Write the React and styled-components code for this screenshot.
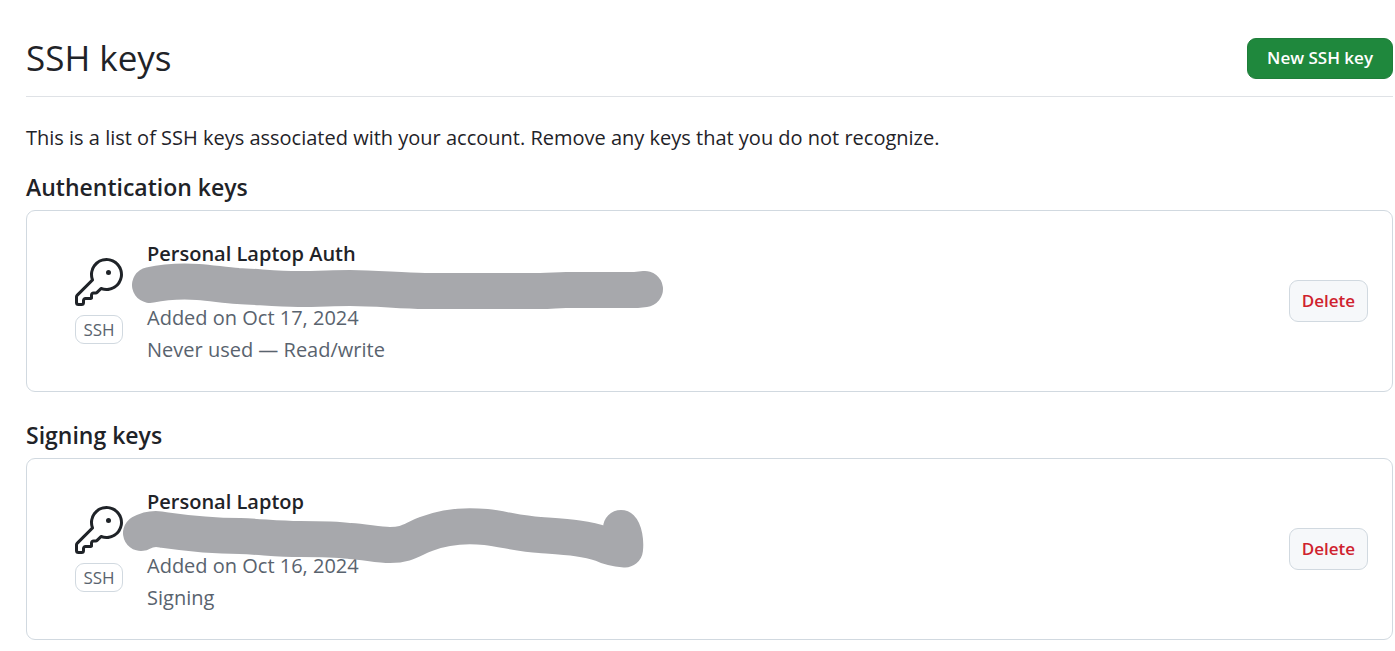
import React from "react";
import styled, { createGlobalStyle } from "styled-components";

const GlobalStyle = createGlobalStyle`
  *, *::before, *::after { box-sizing: border-box; }
  body {
    margin: 0;
    background: #ffffff;
    color: #1f2328;
    font-family: "Segoe UI", "Open Sans", "Noto Sans", sans-serif;
    font-size: 20px;
    line-height: 32px;
  }
`;

const Page = styled.main`
  padding: 32px 2px 10px 26px;
`;

const Header = styled.header`
  display: flex;
  align-items: center;
  justify-content: space-between;
  padding-bottom: 12px;
  border-bottom: 1px solid #dfe2e6;
`;

const Title = styled.h1`
  margin: 0;
  font-size: 35px;
  line-height: 52px;
  font-weight: 400;
`;

const Button = styled.button`
  height: ${(p) => (p.$primary ? 41 : 42)}px;
  padding: 0 ${(p) => (p.$primary ? 19 : 12)}px;
  border: 1px solid ${(p) => (p.$primary ? "#1f7d3a" : "#d1d9e0")};
  border-radius: 9px;
  background: ${(p) => (p.$primary ? "#1f883d" : "#f6f8fa")};
  color: ${(p) => (p.$primary ? "#ffffff" : "#cf222e")};
  font-family: inherit;
  font-size: 17px;
  line-height: 28px;
  font-weight: 600;
  white-space: nowrap;
  cursor: pointer;
`;

const Intro = styled.p`
  margin: 25px 0 16px;
`;

const Section = styled.section`
  & + & { margin-top: 26px; }
`;

const SectionTitle = styled.h2`
  margin: 0 0 6px;
  font-size: 23px;
  line-height: 34px;
  font-weight: 600;
`;

const KeyList = styled.ul`
  margin: 0;
  padding: 0;
  list-style: none;
  border: 1px solid #d1d9e0;
  border-radius: 9px;
`;

const KeyRow = styled.li`
  display: flex;
  align-items: center;
  gap: 24px;
  padding: 25px 24px 25px 48px;
`;

const KeyKind = styled.div`
  display: flex;
  flex-direction: column;
  align-items: center;
  gap: 9px;
  width: 48px;
`;

const Badge = styled.span`
  width: 100%;
  border: 1px solid #d1d9e0;
  border-radius: 9px;
  color: #59636e;
  font-size: 17px;
  line-height: 27px;
  text-align: center;
`;

const Details = styled.div`
  flex: 1;
  min-width: 0;
  padding-top: 2px;
  color: #59636e;
`;

const KeyName = styled.strong`
  display: block;
  color: #1f2328;
  font-weight: 600;
`;

const Fingerprint = styled.div`
  position: relative;
  height: 32px;
`;

const Marker = styled.svg`
  position: absolute;
  left: -27px;
  top: -11px;
  overflow: visible;
  fill: none;
  stroke: #a7a8ac;
  stroke-width: 36;
  stroke-linecap: round;
  stroke-linejoin: round;
`;

const Line = styled.span`
  display: block;
`;

const KeyIcon = () => (
  <svg width="48" height="48" viewBox="0 0 24 24" fill="#1f2328" aria-hidden="true">
    <path d="M16.75 8.5a1.25 1.25 0 1 0 0-2.5 1.25 1.25 0 0 0 0 2.5Z" />
    <path d="M15.75 0a8.25 8.25 0 1 1-2.541 16.101l-1.636 1.636a1.744 1.744 0 0 1-1.237.513H9.25a.25.25 0 0 0-.25.25v1.448a.876.876 0 0 1-.256.619l-.214.213a.75.75 0 0 1-.545.22H5.25a.25.25 0 0 0-.25.25v1A1.75 1.75 0 0 1 3.25 24h-1.5A1.75 1.75 0 0 1 0 22.25v-2.836c0-.464.185-.908.513-1.236l7.386-7.388A8.249 8.249 0 0 1 15.75 0ZM9 8.25a6.733 6.733 0 0 0 .463 2.462.75.75 0 0 1-.168.804l-7.722 7.721a.25.25 0 0 0-.073.177v2.836c0 .138.112.25.25.25h1.5a.25.25 0 0 0 .25-.25v-1c0-.966.784-1.75 1.75-1.75H7.5v-1c0-.966.784-1.75 1.75-1.75h1.086a.25.25 0 0 0 .177-.073l1.971-1.972a.75.75 0 0 1 .804-.168A6.75 6.75 0 1 0 9 8.25Z" />
  </svg>
);

const groups = [
  {
    title: "Authentication keys",
    keys: [
      {
        name: "Personal Laptop Auth",
        marker: "M30 26 C44 23 62 22 78 23 C92 24 104 26 118 27 C140 28 158 30 178 30 C200 30 212 29 230 29 C258 29 280 32 305 32 L420 32 C432 32 436 31 446 31 L516 31 L525 30",
        lines: ["Added on Oct 17, 2024", "Never used — Read/write"],
      },
    ],
  },
  {
    title: "Signing keys",
    keys: [
      {
        name: "Personal Laptop",
        marker: "M21 26 C28 22 36 21 44 23 C72 27 98 29 120 29 C144 30 158 32 180 32 C200 32 214 32 230 34 C246 35 258 38 270 38 C288 38 292 32 306 27 C326 19 346 18 366 20 C384 22 400 27 420 28 C446 30 466 31 482 37 C490 41 498 42 505 42.500 C506 34 504 24 501 21",
        lines: ["Added on Oct 16, 2024", "Signing"],
      },
    ],
  },
];

export default function App() {
  return (
    <>
      <GlobalStyle />
      <Page>
        <Header>
          <Title>SSH keys</Title>
          <Button type="button" $primary>New SSH key</Button>
        </Header>
        <Intro>
          This is a list of SSH keys associated with your account. Remove any keys that you do not recognize.
        </Intro>
        {groups.map((group) => (
          <Section key={group.title}>
            <SectionTitle>{group.title}</SectionTitle>
            <KeyList>
              {group.keys.map((item) => (
                <KeyRow key={item.name}>
                  <KeyKind>
                    <KeyIcon />
                    <Badge>SSH</Badge>
                  </KeyKind>
                  <Details>
                    <KeyName>{item.name}</KeyName>
                    <Fingerprint>
                      <Marker width="550" height="64" viewBox="0 0 550 64" aria-hidden="true">
                        <path d={item.marker} />
                      </Marker>
                    </Fingerprint>
                    {item.lines.map((line) => (
                      <Line key={line}>{line}</Line>
                    ))}
                  </Details>
                  <Button type="button">Delete</Button>
                </KeyRow>
              ))}
            </KeyList>
          </Section>
        ))}
      </Page>
    </>
  );
}
